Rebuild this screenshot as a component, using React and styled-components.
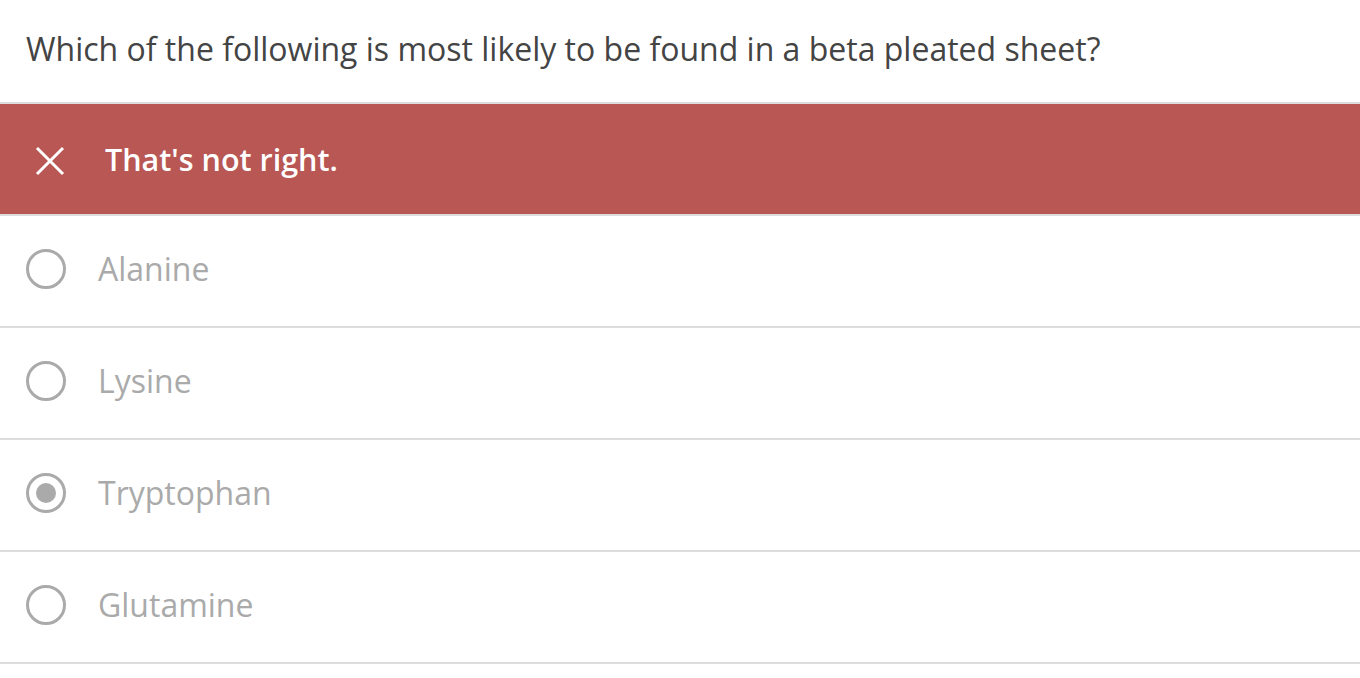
import styled, { createGlobalStyle } from 'styled-components';

const GlobalStyle = createGlobalStyle`
  html, body {
    margin: 0;
    padding: 0;
    background: #fff;
    font-family: "Open Sans", "Noto Sans", sans-serif;
  }
`;

const choices = [
  { id: 'a', label: 'Alanine' },
  { id: 'b', label: 'Lysine' },
  { id: 'c', label: 'Tryptophan', selected: true },
  { id: 'd', label: 'Glutamine' },
];

const App = () => {
  return (
    <>
      <GlobalStyle />
      <Quiz>
        <Question>Which of the following is most likely to be found in a beta pleated sheet?</Question>
        <Feedback>
          <svg width="30" height="30" viewBox="0 0 30 30">
            <path d="M2 2 L28 28 M28 2 L2 28" stroke="#fff" strokeWidth="3" fill="none" />
          </svg>
          <span>That's not right.</span>
        </Feedback>
        <Choices>
          {choices.map((c) => (
            <Choice key={c.id}>
              <Radio $selected={c.selected} />
              <Label>{c.label}</Label>
            </Choice>
          ))}
        </Choices>
      </Quiz>
    </>
  );
};

const Quiz = styled.div`
  width: 100%;
`;

const Question = styled.div`
  height: 104px;
  box-sizing: border-box;
  padding: 0 26px 6px;
  display: flex;
  align-items: center;
  font-size: 32px;
  color: #444;
  border-bottom: 2px solid #ddd;
`;

const Feedback = styled.div`
  height: 110px;
  background: #b85754;
  display: flex;
  align-items: center;
  gap: 40px;
  padding-left: 35px;
  color: #fff;
  font-size: 30.5px;
  font-weight: 600;
  border-bottom: 2px solid #ddd;

  svg {
    flex-shrink: 0;
    margin-top: 3px;
  }
`;

const Choices = styled.div`
  display: flex;
  flex-direction: column;
`;

const Choice = styled.div`
  height: 110px;
  box-sizing: content-box;
  display: flex;
  align-items: center;
  gap: 32px;
  padding-left: 26px;
  border-bottom: 2px solid #ddd;

  & > * {
    margin-bottom: 5px;
  }
`;

const Radio = styled.span`
  width: 40px;
  height: 40px;
  box-sizing: border-box;
  border: 3px solid #aaa;
  border-radius: 50%;
  display: flex;
  align-items: center;
  justify-content: center;

  &::after {
    content: '';
    width: 20px;
    height: 20px;
    border-radius: 50%;
    background: #aaa;
    display: ${(p) => (p.$selected ? 'block' : 'none')};
  }
`;

const Label = styled.span`
  font-size: 32px;
  color: #aaa;
`;

export default App;
